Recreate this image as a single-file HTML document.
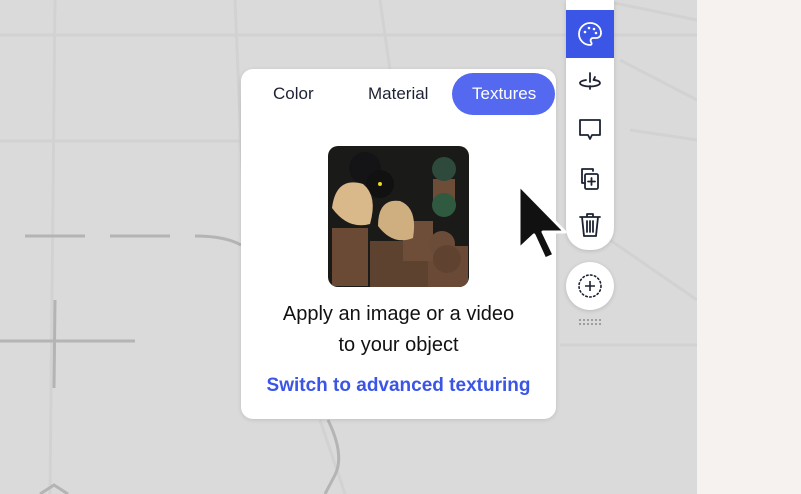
<!DOCTYPE html>
<html><head><style>
*{margin:0;padding:0;box-sizing:border-box}
body{width:801px;height:494px;overflow:hidden;background:#dadada;font-family:"Liberation Sans",sans-serif;position:relative}
.abs{position:absolute}
</style></head><body>
<svg class="abs" style="left:0;top:0" width="801" height="494">
<g stroke="#d2d2d2" stroke-width="3" fill="none">
<line x1="55" y1="0" x2="50" y2="494"/>
<line x1="235" y1="0" x2="245" y2="240"/>
<line x1="380" y1="0" x2="390" y2="70"/>
<line x1="0" y1="35" x2="697" y2="35"/>
<line x1="0" y1="141" x2="241" y2="141"/>
<line x1="600" y1="0" x2="697" y2="20"/>
<line x1="560" y1="345" x2="697" y2="345"/>
<line x1="620" y1="60" x2="697" y2="100"/>
<line x1="630" y1="130" x2="697" y2="140"/>
<line x1="610" y1="240" x2="697" y2="300"/>
<line x1="320" y1="420" x2="345" y2="494"/>
</g>
<g stroke="#b4b4b4" stroke-width="3" fill="none">
<line x1="25" y1="236" x2="85" y2="236"/>
<line x1="110" y1="236" x2="170" y2="236"/>
<path d="M195 236 Q225 236 241 245"/>
<line x1="0" y1="341" x2="135" y2="341"/>
<line x1="55" y1="300" x2="54" y2="388"/>
<path d="M328 420 Q345 455 335 475 L325 494"/>
<path d="M40 494 L54 485 L68 494"/>
</g>
</svg>
<div class="abs" style="left:697px;top:0;width:104px;height:494px;background:#f5f2ef"></div>

<div class="abs" style="left:566px;top:0;width:48px;height:250px;background:#fff;border-radius:0 0 22px 22px;box-shadow:0 1px 4px rgba(0,0,0,.15)"></div>
<div class="abs" style="left:566px;top:10px;width:48px;height:48px;background:#3b55e6"></div>
<svg class="abs" style="left:566px;top:10px" width="48" height="250" fill="none" stroke-width="1.8" stroke-linecap="round" stroke-linejoin="round">
<path stroke="#fff" d="M24 13c-6 0-11 5-11 11s5 11 11 11c2 0 2-2 1-3-1-2 0-4 2-4h3c3 0 5-2 5-5 0-6-5-10-11-10z"/>
<circle cx="19" cy="22" r="1.3" fill="#fff" stroke="none"/><circle cx="23" cy="18" r="1.3" fill="#fff" stroke="none"/><circle cx="28" cy="19" r="1.3" fill="#fff" stroke="none"/><circle cx="30" cy="23" r="1.3" fill="#fff" stroke="none"/>
<g stroke="#1c2233">
<path d="M24 63v9M24 76v3M20 70c-4 0.7-6 1.8-6 3 0 2 4.5 3.5 10 3.5s10-1.5 10-3.5c0-1.3-2-2.5-5-3"/><path d="M29 67l-1.5 3 3 .5"/>
<path d="M14 110h20v15h-8l-2 4-2-4h-8z"/>
<path d="M19 173h-3v-14h11v2"/><rect x="19" y="164" width="13" height="15" rx="1.5"/><path d="M25.5 168v7M22 171.5h7"/>
<path d="M14 207h20M21 207v-3h6v3M16 207l2 19h12l2-19M21 211v11M24 211v11M27 211v11"/>
</g></svg>
<div class="abs" style="left:566px;top:262px;width:48px;height:48px;background:#fff;border-radius:50%;box-shadow:0 1px 4px rgba(0,0,0,.15)"></div>
<svg class="abs" style="left:566px;top:262px" width="48" height="48" fill="none" stroke="#1c2233" stroke-width="1.6"><circle cx="24" cy="24" r="11" stroke-dasharray="1.5 2.5" stroke-linecap="round"/><path d="M24 19v10M19 24h10"/></svg>
<div class="abs" style="left:578px;top:318px;width:24px;height:9px;background-image:radial-gradient(#999 1px,transparent 1.2px);background-size:4px 4px"></div>

<div class="abs" style="left:241px;top:69px;width:315px;height:350px;background:#fff;border-radius:12px;box-shadow:0 1px 4px rgba(0,0,0,.12)"></div>
<div class="abs" style="left:452px;top:73px;width:103px;height:42px;background:#5468f0;border-radius:21px"></div>
<div class="abs" style="left:273px;top:84px;font-size:17px;color:#1c2233">Color</div>
<div class="abs" style="left:368px;top:84px;font-size:17px;color:#1c2233">Material</div>
<div class="abs" style="left:472px;top:84px;font-size:17px;color:#fff">Textures</div>
<div class="abs" style="left:328px;top:146px;width:141px;height:141px;border-radius:10px;overflow:hidden;background:#1a1a18">
<svg width="141" height="141">
<rect x="4" y="82" width="36" height="58" fill="#6b4a35"/>
<rect x="42" y="95" width="58" height="46" fill="#5e4230"/>
<rect x="100" y="100" width="40" height="41" fill="#6a4a36"/>
<rect x="75" y="75" width="30" height="40" fill="#6e4e38"/>
<rect x="105" y="33" width="22" height="30" fill="#6d4d38"/>
<circle cx="114" cy="98" r="13" fill="#6a4c38"/><circle cx="119" cy="113" r="14" fill="#5f4330"/>
<circle cx="37" cy="22" r="16" fill="#141416"/><circle cx="52" cy="38" r="14" fill="#111"/><circle cx="52" cy="38" r="2" fill="#e8d820"/>
<circle cx="116" cy="23" r="12" fill="#2d4a3d"/><circle cx="116" cy="59" r="12" fill="#2f5a40"/>
<path d="M4 62 Q8 30 35 38 Q50 50 42 78 Q20 84 4 62z" fill="#d9b88a"/>
<path d="M50 80 Q50 52 72 55 Q90 62 85 92 Q65 100 50 80z" fill="#cfae80"/>
</svg></div>
<div class="abs" style="left:241px;top:299px;width:315px;text-align:center;font-size:20px;line-height:31px;color:#111">Apply an image or a video<br>to your object</div>
<div class="abs" style="left:241px;top:375px;width:315px;text-align:center;font-size:19px;font-weight:bold;color:#3b55e6">Switch to advanced texturing</div>

<svg class="abs" style="left:515px;top:182px" width="54" height="84"><path d="M4 3v64l15-14 11 24 9-4-11-23h22z" fill="#111" stroke="#fff" stroke-width="3" stroke-linejoin="round"/></svg>
</body></html>
